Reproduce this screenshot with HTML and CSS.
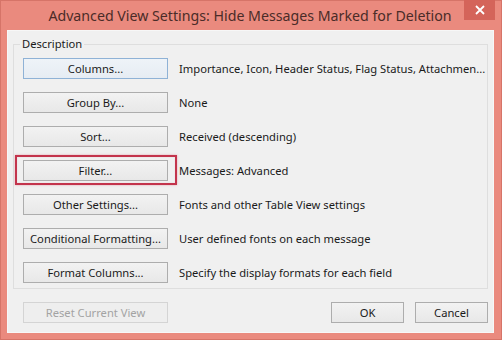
FILE: index.html
```html
<!DOCTYPE html>
<html>
<head>
<meta charset="utf-8">
<link rel="stylesheet" href="styles.css">
</head>
<body>
<div class="window">
  <div class="titlebar">
    <div class="title">Advanced View Settings: Hide Messages Marked for Deletion</div>
    <div class="winx"><svg width="10" height="10" viewBox="0 0 10 10"><path d="M1 1L9 9M9 1L1 9" stroke="#ffffff" stroke-width="1.8" fill="none"/></svg></div>
  </div>
  <div class="content">
    <fieldset class="group">
      <legend>Description</legend>
      <div class="row"><button class="btn default">Columns...</button><span class="desc">Importance, Icon, Header Status, Flag Status, Attachmen...</span></div>
      <div class="row"><button class="btn">Group By...</button><span class="desc">None</span></div>
      <div class="row"><button class="btn">Sort...</button><span class="desc">Received (descending)</span></div>
      <div class="row"><button class="btn highlighted">Filter...</button><span class="desc">Messages: Advanced</span></div>
      <div class="row"><button class="btn">Other Settings...</button><span class="desc">Fonts and other Table View settings</span></div>
      <div class="row"><button class="btn">Conditional Formatting...</button><span class="desc">User defined fonts on each message</span></div>
      <div class="row"><button class="btn">Format Columns...</button><span class="desc">Specify the display formats for each field</span></div>
    </fieldset>
    <div class="footer">
      <button class="btn disabled">Reset Current View</button>
      <div class="actions">
        <button class="btn small">OK</button>
        <button class="btn small">Cancel</button>
      </div>
    </div>
  </div>
</div>
</body>
</html>
```
FILE: styles.css
```css
* { box-sizing: border-box; }
html, body { margin: 0; padding: 0; }
body {
  width: 502px;
  height: 340px;
  background: #ea8a7e;
  font-family: "Noto Sans", "Open Sans", sans-serif;
  overflow: hidden;
}
.window {
  width: 502px;
  height: 340px;
  border: 1px solid #d67468;
  background: #ea8a7e;
  display: flex;
  flex-direction: column;
}
.titlebar {
  height: 29px;
  display: flex;
  align-items: flex-start;
  padding-right: 6px;
}
.title {
  flex: 1;
  text-align: center;
  padding-left: 35px;
  font-size: 14.2px;
  line-height: 29px;
  color: #4a2c28;
  white-space: nowrap;
}
.winx {
  flex: none;
  width: 31px;
  height: 20px;
  margin-top: -1px;
  background: #d4645a;
  display: flex;
  align-items: center;
  justify-content: center;
}
.content {
  margin: 0 7px 6px 6px;
  flex: 1;
  background: #f0f0f0;
  border: 1px solid #f7f7f7;
  padding: 5px 5px 0 5px;
  display: flex;
  flex-direction: column;
}
.group {
  margin: 0;
  border: 1px solid #dedede;
  padding: 6px 0 0 9px;
  height: 253px;
}
.group legend {
  font-size: 11.2px;
  color: #1a1a1a;
  padding: 0 2px;
  margin-left: -3px;
  line-height: 16px;
}
.row {
  display: flex;
  align-items: center;
  gap: 11px;
  height: 21px;
  margin-bottom: 13px;
}
.btn {
  font-family: "Noto Sans", "Open Sans", sans-serif;
  font-size: 11.2px;
  color: #1a1a1a;
  width: 145px;
  height: 21px;
  padding: 0;
  border: 1px solid #adadad;
  background: linear-gradient(#f2f2f2, #e8e8e8);
  line-height: 18px;
  flex: none;
}
.btn.default {
  border-color: #8fb2d6;
  background: linear-gradient(#eef3f8, #e6ecf3);
}
.btn.highlighted { position: relative; }
.btn.highlighted::after {
  content: "";
  position: absolute;
  top: -6px;
  left: -9px;
  right: -10px;
  bottom: -5px;
  border: 2px solid #c3344c;
  box-shadow: 0 0 2px rgba(220, 90, 110, 0.5), inset 0 0 1px rgba(220, 90, 110, 0.4);
}
.btn.disabled {
  color: #a3a3a3;
  border-color: #d4d4d4;
  background: #eeeeee;
}
.btn.small { width: 73px; }
.desc {
  font-size: 11.2px;
  color: #1a1a1a;
  white-space: nowrap;
}
.footer {
  display: flex;
  justify-content: space-between;
  align-items: center;
  margin-top: 13px;
  padding-left: 10px;
}
.actions {
  display: flex;
  gap: 11px;
}
```
